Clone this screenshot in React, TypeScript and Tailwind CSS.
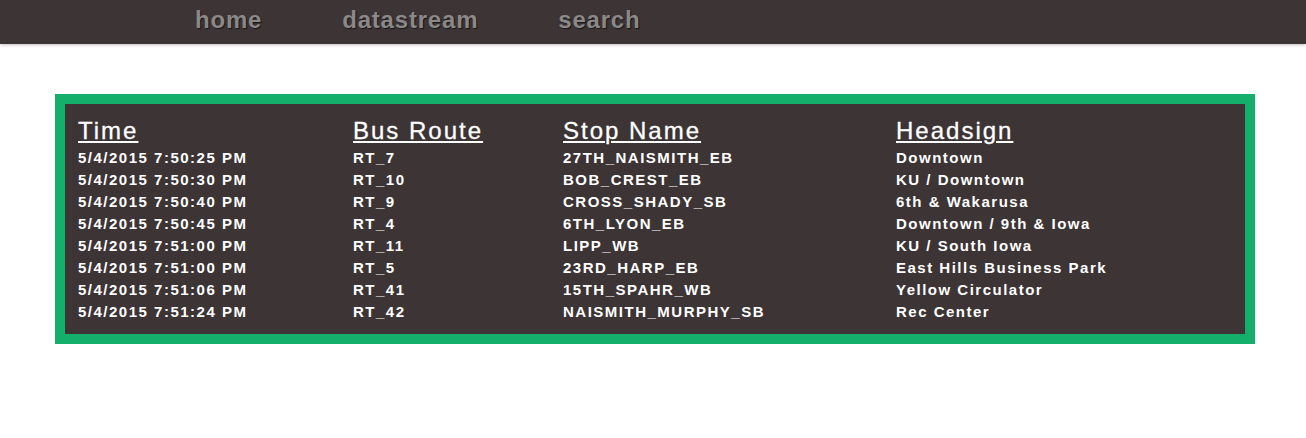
const rows = [
  ["5/4/2015 7:50:25 PM", "RT_7", "27TH_NAISMITH_EB", "Downtown"],
  ["5/4/2015 7:50:30 PM", "RT_10", "BOB_CREST_EB", "KU / Downtown"],
  ["5/4/2015 7:50:40 PM", "RT_9", "CROSS_SHADY_SB", "6th & Wakarusa"],
  ["5/4/2015 7:50:45 PM", "RT_4", "6TH_LYON_EB", "Downtown / 9th & Iowa"],
  ["5/4/2015 7:51:00 PM", "RT_11", "LIPP_WB", "KU / South Iowa"],
  ["5/4/2015 7:51:00 PM", "RT_5", "23RD_HARP_EB", "East Hills Business Park"],
  ["5/4/2015 7:51:06 PM", "RT_41", "15TH_SPAHR_WB", "Yellow Circulator"],
  ["5/4/2015 7:51:24 PM", "RT_42", "NAISMITH_MURPHY_SB", "Rec Center"],
];

const heads = ["Time", "Bus Route", "Stop Name", "Headsign"];
const cols = "grid grid-cols-[275px_210px_333px_1fr]";

export default function App() {
  return (
    <div className="min-h-[438px] bg-white font-['Liberation_Sans',Arial,sans-serif]">
      <nav className="flex h-[44px] items-start gap-[80px] bg-[#3d3435] pl-[195px] shadow-[0_1px_3px_rgba(0,0,0,0.25)]">
        {["home", "datastream", "search"].map((l) => (
          <a
            key={l}
            className="text-[24px] font-bold leading-[40px] tracking-[0.8px] text-[#8a8888] [text-shadow:1px_1px_1px_rgba(0,0,0,0.6)]"
          >
            {l}
          </a>
        ))}
      </nav>

      <div className="ml-[55px] mt-[50px] w-[1200px] border-[10px] border-[#14b06b] bg-[#3d3435] px-[13px] pt-[11px] pb-[11px] text-white">
        <div className={cols}>
          {heads.map((h) => (
            <span
              key={h}
              className="text-[24px] leading-[32px] tracking-[2px] underline decoration-2 underline-offset-[2px] [-webkit-text-stroke:0.3px_white]"
            >
              {h}
            </span>
          ))}
        </div>
        {rows.map((r, i) => (
          <div key={i} className={cols}>
            {r.map((c, j) => (
              <span
                key={j}
                className="text-[15px] font-bold leading-[22px] tracking-[1.5px]"
              >
                {c}
              </span>
            ))}
          </div>
        ))}
      </div>
    </div>
  );
}
